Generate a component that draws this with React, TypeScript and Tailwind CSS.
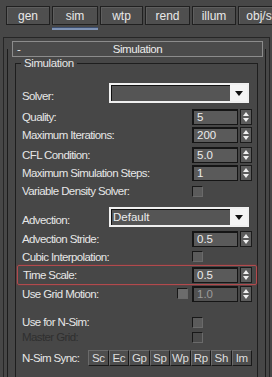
import React from 'react';

const font = { fontFamily: '"Liberation Sans", Arial, sans-serif' };

const tabs = [
  { name: 'gen', w: 'w-[44px]' },
  { name: 'sim', w: 'w-[46px]', active: true },
  { name: 'wtp', w: 'w-[43px]' },
  { name: 'rend', w: 'w-[45px]' },
  { name: 'illum', w: 'w-[44px]' },
  { name: 'obj/src', w: 'w-[52px]' },
];

const syncButtons = ['Sc', 'Ec', 'Gp', 'Sp', 'Wp', 'Rp', 'Sh', 'Im'];

const Label: React.FC<{ text: string; dim?: boolean }> = ({ text, dim }) => (
  <span className={`text-[11.5px] leading-[14px] tracking-[-0.6px] whitespace-nowrap ${dim ? 'text-[#2f2f2f]' : 'text-[#e6e6e6]'}`}>
    {text}
  </span>
);

const Spinner: React.FC = () => (
  <div className="w-[12px] h-[16px] bg-[#5c5c5c] border border-[#1b1b1b] flex flex-col items-center justify-center gap-[2px]">
    <svg width="6" height="4" viewBox="0 0 6 4">
      <path d="M3 0L6 4H0z" fill="#f0f0f0" />
    </svg>
    <svg width="6" height="4" viewBox="0 0 6 4">
      <path d="M0 0H6L3 4z" fill="#f0f0f0" />
    </svg>
  </div>
);

const Field: React.FC<{ value: string; disabled?: boolean }> = ({ value, disabled }) => (
  <div className="flex items-center gap-[2px]">
    <div
      className={`w-[46px] h-[16px] border border-[#151515] shadow-[inset_1px_1px_0_#151515] flex items-center pl-[4px] text-[11.5px] leading-[14px] ${
        disabled ? 'bg-[#515151] text-[#9c9c9c]' : 'bg-[#5a5a5a] text-[#ececec]'
      }`}
    >
      {value}
    </div>
    <Spinner />
  </div>
);

const Check: React.FC<{ dim?: boolean; light?: boolean }> = ({ dim, light }) => (
  <div
    className={`w-[11px] h-[11px] border border-t-[#181818] border-l-[#181818] border-r-[#6a6a6a] border-b-[#6a6a6a] ${
      dim ? 'bg-[#4a4a4a]' : light ? 'bg-[#6c6c6c]' : 'bg-[#5b5b5b]'
    }`}
  />
);

const Dropdown: React.FC<{ value?: string }> = ({ value }) => (
  <div className="w-[140px] h-[20px] mr-[3px] border-2 border-[#f0f0f0] flex">
    <div className="flex-1 bg-[#555555] shadow-[inset_1px_1px_0_#111] flex items-center pl-[2px] text-[11.5px] leading-[14px] text-[#ececec]">
      {value}
    </div>
    <div className="w-[17px] bg-[#f4f4f4] flex items-center justify-center">
      <svg width="8" height="5" viewBox="0 0 8 5">
        <path d="M0 0H8L4 5z" fill="#111" />
      </svg>
    </div>
  </div>
);

const Row: React.FC<{ label: string; children?: React.ReactNode; className?: string; dim?: boolean }> = ({
  label,
  children,
  className = 'h-[18px]',
  dim,
}) => (
  <div className={`flex items-center justify-between ${className}`}>
    <Label text={label} dim={dim} />
    {children}
  </div>
);

const App: React.FC = () => {
  return (
    <div className="w-[272px] h-[377px] overflow-hidden bg-[#474747]" style={font}>
      {/* tab strip */}
      <div className="flex gap-[2px] pl-[6px] pt-[6px]">
        {tabs.map(t => (
          <div key={t.name} className={`flex flex-col shrink-0 ${t.w}`}>
            <div className="h-[19px] bg-[#4f4f4f] border border-[#202020] shadow-[inset_1px_1px_0_#5e5e5e] flex items-center justify-center text-[12px] leading-[14px] text-[#e8e8e8] whitespace-nowrap">
              {t.name}
            </div>
            <div className={`mt-[2px] h-[3px] ${t.active ? 'bg-[#7f93b5] border-t border-[#3d4f70]' : ''}`} />
          </div>
        ))}
      </div>

      {/* outer frame */}
      <div className="mt-[7px] ml-[3px] w-[267px] h-[400px] border-t border-x border-[#262626] pt-[3px]">
        <div className="mx-[3px]">
          {/* rollout header */}
          <div className="relative z-10 ml-[5px] w-[251px] h-[16px] border border-[#8c8c8c] bg-[#4b4b4b] flex items-center text-[11.5px] leading-[14px] tracking-[-0.4px] text-[#ececec]">
            <span className="pl-[4px] w-[20px]">-</span>
            <span className="flex-1 text-center pr-[20px]">Simulation</span>
          </div>

          {/* rollout body */}
          <div className="-mt-[8px] pt-[8px] border-x border-[#1c1c1c] h-[360px]">
            <div className="relative mt-[6px] mx-[7px] border border-[#1e1e1e] pl-[6px] pr-[5px] pb-[40px]">
              <span className="absolute -top-[8px] left-[5px] bg-[#474747] px-[3px] text-[11.5px] leading-[14px] tracking-[-0.4px] text-[#e6e6e6]">
                Simulation
              </span>

              <div className="flex items-end justify-between h-[20px] mt-[19px]">
                <Label text="Solver:" />
                <Dropdown />
              </div>

              <Row label="Quality:" className="h-[18px] mt-[5px]">
                <Field value="5" />
              </Row>
              <Row label="Maximum Iterations:">
                <Field value="200" />
              </Row>
              <Row label="CFL Condition:" className="h-[18px] mt-[2px]">
                <Field value="5.0" />
              </Row>
              <Row label="Maximum Simulation Steps:">
                <Field value="1" />
              </Row>
              <Row label="Variable Density Solver:">
                <div className="w-[60px] -ml-[1px]">
                  <Check />
                </div>
              </Row>

              <div className="flex items-end justify-between h-[20px] mt-[7px]">
                <Label text="Advection:" />
                <Dropdown value="Default" />
              </div>

              <Row label="Advection Stride:" className="h-[18px] mt-[3px]">
                <Field value="0.5" />
              </Row>
              <Row label="Cubic Interpolation:" className="h-[17px]">
                <div className="w-[60px] -ml-[1px]">
                  <Check />
                </div>
              </Row>

              <div className="-ml-[5px] -mr-[5px] pl-[5px] pr-[4px] h-[20px] border border-[#b24a4d] rounded-[2px] shadow-[0_0_2px_#8a3a3d] flex items-center justify-between">
                <Label text="Time Scale:" />
                <Field value="0.5" />
              </div>

              <Row label="Use Grid Motion:" className="h-[17px]">
                <div className="flex items-center gap-[4px]">
                  <Check light />
                  <Field value="1.0" disabled />
                </div>
              </Row>

              <Row label="Use for N-Sim:" className="h-[16px] mt-[12px]">
                <div className="w-[60px] -ml-[1px]">
                  <Check />
                </div>
              </Row>
              <Row label="Master Grid:" className="h-[14px]" dim>
                <div className="w-[60px] -ml-[1px]">
                  <Check dim />
                </div>
              </Row>

              <Row label="N-Sim Sync:" className="h-[16px] mt-[6px]">
                <div className="flex w-[164px]">
                  {syncButtons.map(b => (
                    <div
                      key={b}
                      className="flex-1 h-[16px] bg-[#4d4d4d] border border-t-[#6a6a6a] border-l-[#6a6a6a] border-r-[#1a1a1a] border-b-[#1a1a1a] flex items-center justify-center text-[11.5px] leading-[14px] tracking-[-0.4px] text-[#dedede]"
                    >
                      {b}
                    </div>
                  ))}
                </div>
              </Row>
            </div>
          </div>
        </div>
      </div>
    </div>
  );
};

export default App;
